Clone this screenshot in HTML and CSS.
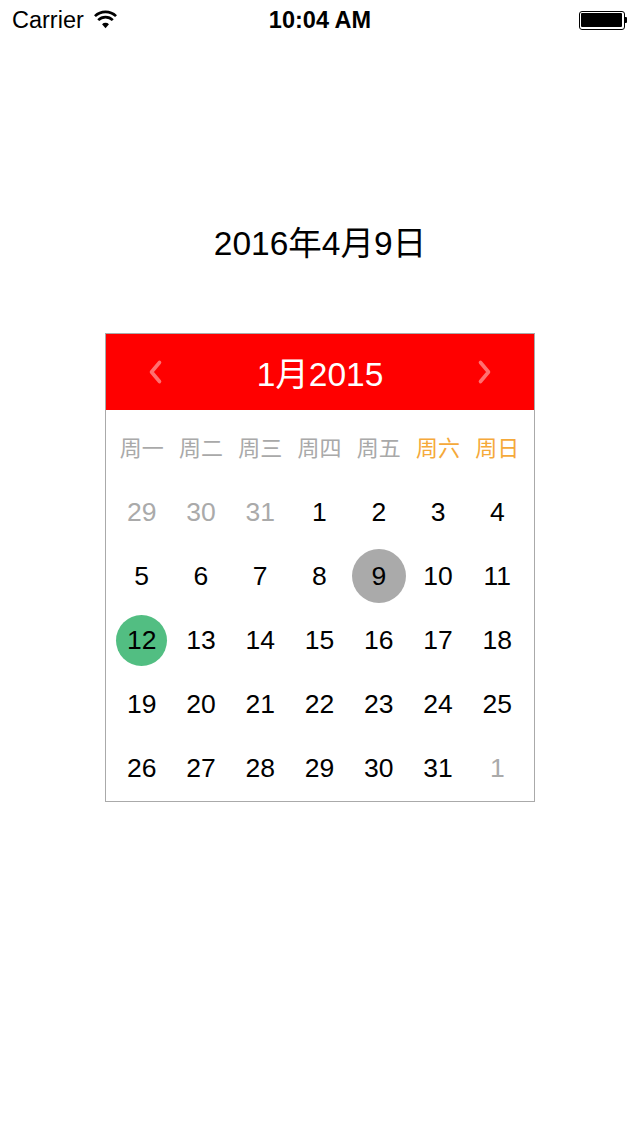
FILE: index.html
```html
<!DOCTYPE html>
<html lang="zh">
<head>
<meta charset="utf-8">
<link rel="stylesheet" href="styles.css">
</head>
<body>
<div class="status">
  <div class="status-left">
    <span class="carrier">Carrier</span>
    <svg class="wifi" width="23" height="19" viewBox="0 0 24 19">
      <path d="M12 18.5 L8.4 14.4 A5.2 5.2 0 0 1 15.6 14.4 Z" fill="#000"/>
      <path d="M4.4 10.2 A10.8 10.8 0 0 1 19.6 10.2" fill="none" stroke="#000" stroke-width="2.8"/>
      <path d="M1 6 A15.8 15.8 0 0 1 23 6" fill="none" stroke="#000" stroke-width="2.8"/>
    </svg>
  </div>
  <div class="time">10:04 AM</div>
  <div class="status-right">
    <div class="battery"><div class="battery-fill"></div></div>
    <div class="battery-tip"></div>
  </div>
</div>

<div class="title">2016年4月9日</div>

<div class="calendar">
  <div class="cal-header">
    <svg class="arrow" width="16" height="26" viewBox="0 0 16 26"><path d="M12.5 3.5 L4.5 13 L12.5 22.5" fill="none" stroke="#ff7070" stroke-width="3.6" stroke-linecap="round" stroke-linejoin="round"/></svg>
    <div class="month">1月2015</div>
    <svg class="arrow" width="16" height="26" viewBox="0 0 16 26"><path d="M3.5 3.5 L11.5 13 L3.5 22.5" fill="none" stroke="#ff7070" stroke-width="3.6" stroke-linecap="round" stroke-linejoin="round"/></svg>
  </div>
  <div class="weekdays">
    <span>周一</span><span>周二</span><span>周三</span><span>周四</span><span>周五</span><span class="weekend">周六</span><span class="weekend">周日</span>
  </div>
  <div class="days">
    <div class="day other"><span>29</span></div>
    <div class="day other"><span>30</span></div>
    <div class="day other"><span>31</span></div>
    <div class="day"><span>1</span></div>
    <div class="day"><span>2</span></div>
    <div class="day"><span>3</span></div>
    <div class="day"><span>4</span></div>

    <div class="day"><span>5</span></div>
    <div class="day"><span>6</span></div>
    <div class="day"><span>7</span></div>
    <div class="day"><span>8</span></div>
    <div class="day"><span class="selected">9</span></div>
    <div class="day"><span>10</span></div>
    <div class="day"><span>11</span></div>

    <div class="day"><span class="today">12</span></div>
    <div class="day"><span>13</span></div>
    <div class="day"><span>14</span></div>
    <div class="day"><span>15</span></div>
    <div class="day"><span>16</span></div>
    <div class="day"><span>17</span></div>
    <div class="day"><span>18</span></div>

    <div class="day"><span>19</span></div>
    <div class="day"><span>20</span></div>
    <div class="day"><span>21</span></div>
    <div class="day"><span>22</span></div>
    <div class="day"><span>23</span></div>
    <div class="day"><span>24</span></div>
    <div class="day"><span>25</span></div>

    <div class="day"><span>26</span></div>
    <div class="day"><span>27</span></div>
    <div class="day"><span>28</span></div>
    <div class="day"><span>29</span></div>
    <div class="day"><span>30</span></div>
    <div class="day"><span>31</span></div>
    <div class="day other"><span>1</span></div>
  </div>
</div>
</body>
</html>
```
FILE: styles.css
```css
html, body {
  margin: 0;
  padding: 0;
  background: #fff;
}
body {
  width: 640px;
  height: 1136px;
  font-family: "Liberation Sans", "Noto Sans CJK SC", sans-serif;
  color: #000;
  display: flex;
  flex-direction: column;
}
.status {
  height: 40px;
  display: flex;
  align-items: center;
  justify-content: space-between;
  padding: 0 13px 0 12px;
  position: relative;
  font-size: 23.5px;
}
.status-left {
  display: flex;
  align-items: center;
  gap: 10px;
}
.wifi {
  margin-top: -2px;
}
.time {
  position: absolute;
  left: 0;
  right: 0;
  text-align: center;
  font-weight: bold;
  pointer-events: none;
}
.status-right {
  display: flex;
  align-items: center;
}
.battery {
  width: 41px;
  height: 14px;
  border: 1.5px solid #000;
  border-radius: 3px;
  padding: 1.5px;
  box-sizing: content-box;
}
.battery-fill {
  width: 100%;
  height: 100%;
  background: #000;
  border-radius: 1px;
}
.battery-tip {
  width: 2.5px;
  height: 6px;
  background: #000;
  border-radius: 0 1px 1px 0;
}
.title {
  margin-top: 184px;
  height: 40px;
  line-height: 40px;
  text-align: center;
  font-size: 33.5px;
}
.calendar {
  margin: 69px 0 0 105px;
  width: 428px;
  border: 1px solid #aaaaaa;
}
.cal-header {
  height: 76px;
  background: #ff0000;
  display: flex;
  align-items: center;
  justify-content: space-between;
  padding: 0 41px;
}
.month {
  color: #fff;
  font-size: 33.5px;
  margin-top: -2px;
}
.weekdays {
  margin-top: 6px;
  height: 64px;
  display: grid;
  grid-template-columns: repeat(7, 1fr);
  padding: 0 7px 0 6px;
  align-items: center;
  font-size: 22px;
  color: #a9a9a9;
}
.weekdays span {
  text-align: center;
  margin-top: -4px;
}
.weekdays .weekend {
  color: #f5a93a;
}
.days {
  display: grid;
  grid-template-columns: repeat(7, 1fr);
  grid-auto-rows: 64px;
  padding: 0 7px 1px 6px;
}
.day {
  display: flex;
  align-items: center;
  justify-content: center;
  font-size: 26.5px;
}
.day span {
  display: flex;
  align-items: center;
  justify-content: center;
  border-radius: 50%;
}
.day.other {
  color: #aaaaaa;
}
.selected {
  width: 54px;
  height: 54px;
  background: #aaaaaa;
}
.today {
  width: 51px;
  height: 51px;
  background: #52be82;
}
```
